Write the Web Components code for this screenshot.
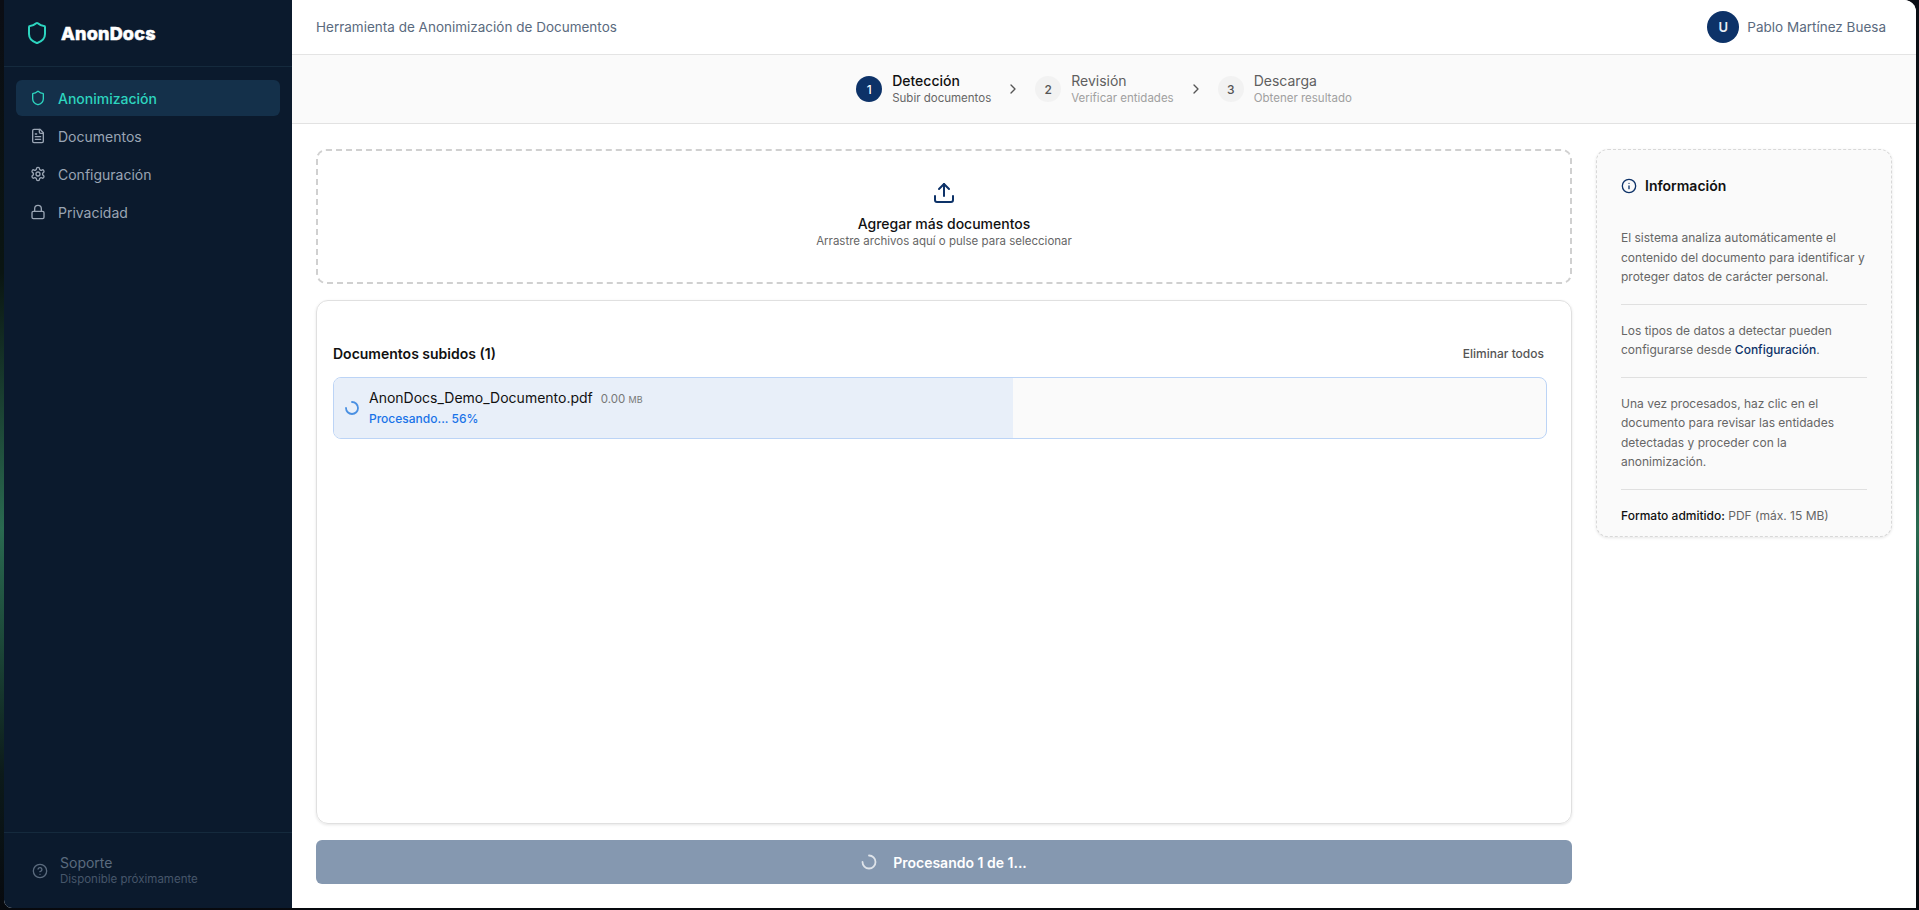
<!DOCTYPE html>
<html lang="es">
<head>
<meta charset="utf-8">
<title>AnonDocs</title>
<style>
  html, body { margin: 0; height: 100%; }
  body {
    width: 1919px; height: 910px; overflow: hidden;
    font-family: Inter, "Liberation Sans", sans-serif;
    background: linear-gradient(180deg, #0b0d14 0%, #0a1512 30%, #2a6a50 58%, #1d4a3a 70%, #0c1a1a 85%, #07090e 100%);
  }
</style>
</head>
<body>
<anon-app>
  <anon-sidebar slot="side"></anon-sidebar>
  <anon-topbar slot="top"></anon-topbar>
  <anon-stepper slot="steps"></anon-stepper>
  <anon-dropzone slot="main"></anon-dropzone>
  <anon-doclist slot="main"></anon-doclist>
  <anon-progress-button slot="main"></anon-progress-button>
  <anon-info slot="aside"></anon-info>
</anon-app>

<script>
const ICONS = {
  shield: '<path d="M20 13c0 5-3.5 7.5-7.66 8.95a1 1 0 0 1-.67-.01C7.5 20.5 4 18 4 13V6a1 1 0 0 1 1-1c2 0 4.5-1.2 6.24-2.72a1.17 1.17 0 0 1 1.52 0C14.51 3.81 17 5 19 5a1 1 0 0 1 1 1z"/>',
  file: '<path d="M15 2H6a2 2 0 0 0-2 2v16a2 2 0 0 0 2 2h12a2 2 0 0 0 2-2V7Z"/><path d="M14 2v4a2 2 0 0 0 2 2h4"/><path d="M10 9H8"/><path d="M16 13H8"/><path d="M16 17H8"/>',
  gear: '<path d="M12.22 2h-.44a2 2 0 0 0-2 2v.18a2 2 0 0 1-1 1.73l-.43.25a2 2 0 0 1-2 0l-.15-.08a2 2 0 0 0-2.73.73l-.22.38a2 2 0 0 0 .73 2.73l.15.1a2 2 0 0 1 1 1.72v.51a2 2 0 0 1-1 1.74l-.15.09a2 2 0 0 0-.73 2.73l.22.38a2 2 0 0 0 2.73.73l.15-.08a2 2 0 0 1 2 0l.43.25a2 2 0 0 1 1 1.73V20a2 2 0 0 0 2 2h.44a2 2 0 0 0 2-2v-.18a2 2 0 0 1 1-1.73l.43-.25a2 2 0 0 1 2 0l.15.08a2 2 0 0 0 2.73-.73l.22-.39a2 2 0 0 0-.73-2.73l-.15-.08a2 2 0 0 1-1-1.74v-.5a2 2 0 0 1 1-1.74l.15-.09a2 2 0 0 0 .73-2.73l-.22-.38a2 2 0 0 0-2.73-.73l-.15.08a2 2 0 0 1-2 0l-.43-.25a2 2 0 0 1-1-1.73V4a2 2 0 0 0-2-2z"/><circle cx="12" cy="12" r="3"/>',
  lock: '<rect x="3" y="11" width="18" height="11" rx="2"/><path d="M7 11V7a5 5 0 0 1 10 0v4"/>',
  help: '<circle cx="12" cy="12" r="10"/><path d="M9.09 9a3 3 0 0 1 5.83 1c0 2-3 3-3 3"/><path d="M12 17h.01"/>',
  chevron: '<path d="m9 18 6-6-6-6"/>',
  upload: '<path d="M21 15v4a2 2 0 0 1-2 2H5a2 2 0 0 1-2-2v-4"/><path d="M17 8l-5-5-5 5"/><path d="M12 3v12"/>',
  info: '<circle cx="12" cy="12" r="10"/><path d="M12 16v-4"/><path d="M12 8h.01"/>'
};
const icon = (name, size, sw) => `<svg width="${size}" height="${size}" viewBox="0 0 24 24" fill="none" stroke="currentColor" stroke-width="${sw || 2}" stroke-linecap="round" stroke-linejoin="round">${ICONS[name]}</svg>`;

class BaseEl extends HTMLElement {
  constructor(html) {
    super();
    this.attachShadow({ mode: 'open' });
    this.shadowRoot.innerHTML = html;
  }
}

class AnonApp extends BaseEl {
  constructor() {
    super(`<style>
      :host { display: block; height: 908px; padding: 0 3px 0 4px; }
      .win { display: flex; height: 100%; border-radius: 0 12px 0 8px; overflow: hidden; background: #fff; }
      .side { flex: 0 0 288px; display: flex; }
      .body { flex: 1; display: flex; flex-direction: column; min-width: 0; }
      .content { flex: 1; display: flex; gap: 24px; padding: 25px 24px 24px; min-height: 0; }
      .main { flex: 1; display: flex; flex-direction: column; gap: 16px; min-width: 0; }
      .aside { flex: 0 0 296px; }
    </style>
    <div class="win">
      <div class="side"><slot name="side"></slot></div>
      <div class="body">
        <slot name="top"></slot>
        <slot name="steps"></slot>
        <div class="content">
          <div class="main"><slot name="main"></slot></div>
          <div class="aside"><slot name="aside"></slot></div>
        </div>
      </div>
    </div>`);
  }
}

class AnonSidebar extends BaseEl {
  constructor() {
    super(`<style>
      :host { display: flex; flex-direction: column; width: 100%; background: #0b1a2d; color: #9aa5b4; }
      .brand { height: 67px; box-sizing: border-box; border-bottom: 1px solid #152a3d; display: flex; align-items: center; padding-left: 21px; gap: 12px; color: #2dd4bf; }
      .brand svg { display: block; }
      .brand b { font: 800 18px Inter, sans-serif; color: #fff; letter-spacing: .2px; -webkit-text-stroke: .5px #fff; }
      nav { flex: 1; padding: 13px 12px; display: flex; flex-direction: column; gap: 2px; }
      .item { height: 36px; display: flex; align-items: center; gap: 12px; padding-left: 14px; font-size: 14px; border-radius: 6px; }
      .item svg { flex: none; }
      .item.on { background: #14304a; color: #2dd4bf; font-weight: 500; }
      .foot { height: 76px; box-sizing: border-box; border-top: 1px solid #152a3d; display: flex; align-items: center; gap: 12px; padding: 0 0 0 28px; color: #5b6b7e; }
      .foot .t { font-size: 14px; line-height: 17px; }
      .foot .s { font-size: 11.5px; line-height: 17px; color: #46566a; }
    </style>
    <div class="brand">${icon('shield', 24, 2)}<b>AnonDocs</b></div>
    <nav>
      <div class="item on">${icon('shield', 16)}<span>Anonimización</span></div>
      <div class="item">${icon('file', 16)}<span>Documentos</span></div>
      <div class="item">${icon('gear', 16)}<span>Configuración</span></div>
      <div class="item">${icon('lock', 16)}<span>Privacidad</span></div>
    </nav>
    <div class="foot">${icon('help', 16)}<div><div class="t">Soporte</div><div class="s">Disponible próximamente</div></div></div>`);
  }
}

class AnonTopbar extends BaseEl {
  constructor() {
    super(`<style>
      :host { display: flex; align-items: center; justify-content: space-between; height: 54px; box-sizing: content-box; padding: 0 30px 0 24px; border-bottom: 1px solid #e4e4e4; background: #fff; }
      .t { font-size: 13.5px; color: #5a6a7e; }
      .u { display: flex; align-items: center; gap: 8px; font-size: 13.5px; color: #5a6a7e; }
      .a { width: 32px; height: 32px; border-radius: 50%; background: #0d3268; color: #e8eef6; font-size: 13px; font-weight: 600; display: flex; align-items: center; justify-content: center; }
    </style>
    <div class="t">Herramienta de Anonimización de Documentos</div>
    <div class="u"><div class="a">U</div><span>Pablo Martínez Buesa</span></div>`);
  }
}

class AnonStep extends BaseEl {
  constructor() {
    super(`<style>
      :host { display: flex; align-items: center; gap: 10px; }
      .c { width: 26px; height: 26px; border-radius: 50%; background: #f2f2f2; color: #555; font-size: 12px; font-weight: 500; display: flex; align-items: center; justify-content: center; }
      .l { font-size: 14px; line-height: 18px; color: #5f5f5f; }
      .s { font-size: 11.5px; line-height: 16px; color: #a0a0a0; }
      :host([active]) .c { background: #0d3268; color: #fff; }
      :host([active]) .l { color: #111; font-weight: 500; }
      :host([active]) .s { color: #666; }
    </style>
    <div class="c"></div><div><div class="l"></div><div class="s"></div></div>`);
  }
  connectedCallback() {
    this.shadowRoot.querySelector('.c').textContent = this.getAttribute('n');
    this.shadowRoot.querySelector('.l').textContent = this.getAttribute('label');
    this.shadowRoot.querySelector('.s').textContent = this.getAttribute('sub');
  }
}

class AnonStepper extends BaseEl {
  constructor() {
    super(`<style>
      :host { display: flex; align-items: center; justify-content: center; gap: 14px; height: 68px; box-sizing: content-box; background: #fafafa; border-bottom: 1px solid #e2e2e2; color: #555; }
      svg { display: block; }
    </style>
    <anon-step n="1" label="Detección" sub="Subir documentos" active></anon-step>
    ${icon('chevron', 16)}
    <anon-step n="2" label="Revisión" sub="Verificar entidades"></anon-step>
    ${icon('chevron', 16)}
    <anon-step n="3" label="Descarga" sub="Obtener resultado"></anon-step>`);
  }
}

class AnonDropzone extends BaseEl {
  constructor() {
    super(`<style>
      :host { display: flex; flex-direction: column; align-items: center; height: 135px; box-sizing: border-box; border: 2px dashed #d0d0d0; border-radius: 10px; padding-top: 30px; color: #0d3268; }
      svg { display: block; margin-bottom: 10px; }
      .t { font-size: 14px; font-weight: 500; line-height: 18px; color: #111; }
      .s { font-size: 11.5px; line-height: 16px; color: #666; }
    </style>
    ${icon('upload', 24)}
    <div class="t">Agregar más documentos</div>
    <div class="s">Arrastre archivos aquí o pulse para seleccionar</div>`);
  }
}

class AnonDoclist extends BaseEl {
  constructor() {
    super(`<style>
      :host { display: block; flex: 1; box-sizing: border-box; border: 1px solid #e0e0e0; border-radius: 12px; padding: 40px 24px 0 16px; box-shadow: 0 1px 3px rgba(0,0,0,.1); }
      .h { display: flex; justify-content: space-between; align-items: center; height: 24px; margin-bottom: 12px; padding-right: 3px; }
      .h b { font-size: 14px; font-weight: 600; color: #111; }
      .h span { font-size: 12px; font-weight: 500; color: #555; }
    </style>
    <div class="h"><b>Documentos subidos (1)</b><span>Eliminar todos</span></div>
    <anon-doc-row percent="56"></anon-doc-row>`);
  }
}

class AnonDocRow extends BaseEl {
  constructor() {
    super(`<style>
      :host { display: block; position: relative; height: 62px; box-sizing: border-box; border: 1px solid #bcd4f6; border-radius: 8px; background: #fafafa; overflow: hidden; }
      .bar { position: absolute; left: 0; top: 0; bottom: 0; background: #e8eff9; }
      .in { position: relative; display: flex; align-items: center; gap: 10px; height: 100%; padding-left: 11px; }
      .spin { width: 14px; height: 14px; flex: none; }
      .n { font-size: 14px; line-height: 20px; color: #111; display: flex; align-items: baseline; gap: 8px; }
      .n small { font-size: 11.5px; color: #777; }
      .n small i { font-style: normal; font-size: 9px; }
      .p { font-size: 12px; line-height: 18px; font-weight: 500; color: #1a73e8; }
    </style>
    <div class="bar"></div>
    <div class="in">
      <svg class="spin" viewBox="0 0 14 14" fill="none" stroke="#4a90e2" stroke-width="1.8" stroke-linecap="round"><path d="M7 1a6 6 0 1 1-6 6"/></svg>
      <div><div class="n"><span>AnonDocs_Demo_Documento.pdf</span><small>0.00 <i>MB</i></small></div><div class="p"></div></div>
    </div>`);
  }
  connectedCallback() {
    const p = this.getAttribute('percent');
    this.shadowRoot.querySelector('.bar').style.width = p + '%';
    this.shadowRoot.querySelector('.p').textContent = 'Procesando... ' + p + '%';
  }
}

class AnonProgressButton extends BaseEl {
  constructor() {
    super(`<style>
      :host { display: flex; align-items: center; justify-content: center; gap: 16px; height: 44px; flex: none; border-radius: 6px; background: #8598b0; color: #fff; font-size: 14px; font-weight: 600; }
    </style>
    <svg width="16" height="16" viewBox="0 0 16 16" fill="none" stroke="#dfe4ea" stroke-width="1.8" stroke-linecap="round"><path d="M8 1.5a6.5 6.5 0 1 1-6.5 6.5"/></svg>
    <span>Procesando 1 de 1...</span>`);
  }
}

class AnonInfo extends BaseEl {
  constructor() {
    super(`<style>
      :host { display: block; box-sizing: border-box; height: 388px; border: 1px dashed #d8d8d8; border-radius: 12px; background: #fafafa; padding: 24px 24px 0 24px; box-shadow: 0 1px 3px rgba(0,0,0,.1); color: #666; font-size: 12px; line-height: 19.5px; }
      .h { display: flex; align-items: center; gap: 8px; height: 24px; color: #111; font-size: 14px; font-weight: 600; margin-bottom: 30px; }
      .h svg { color: #0d3268; }
      p { margin: 0; }
      hr { border: 0; border-top: 1px solid #e0e0e0; margin: 17px 0 16px; }
      b { color: #111; font-weight: 500; }
      a { color: #0d3268; font-weight: 500; }
    </style>
    <div class="h">${icon('info', 16)}<span>Información</span></div>
    <p>El sistema analiza automáticamente el contenido del documento para identificar y proteger datos de carácter personal.</p>
    <hr>
    <p>Los tipos de datos a detectar pueden configurarse desde <a>Configuración</a>.</p>
    <hr>
    <p>Una vez procesados, haz clic en el documento para revisar las entidades detectadas y proceder con la anonimización.</p>
    <hr>
    <p><b>Formato admitido:</b> PDF (máx. 15 MB)</p>`);
  }
}

customElements.define('anon-app', AnonApp);
customElements.define('anon-sidebar', AnonSidebar);
customElements.define('anon-topbar', AnonTopbar);
customElements.define('anon-step', AnonStep);
customElements.define('anon-stepper', AnonStepper);
customElements.define('anon-dropzone', AnonDropzone);
customElements.define('anon-doc-row', AnonDocRow);
customElements.define('anon-doclist', AnonDoclist);
customElements.define('anon-progress-button', AnonProgressButton);
customElements.define('anon-info', AnonInfo);
</script>
</body>
</html>
